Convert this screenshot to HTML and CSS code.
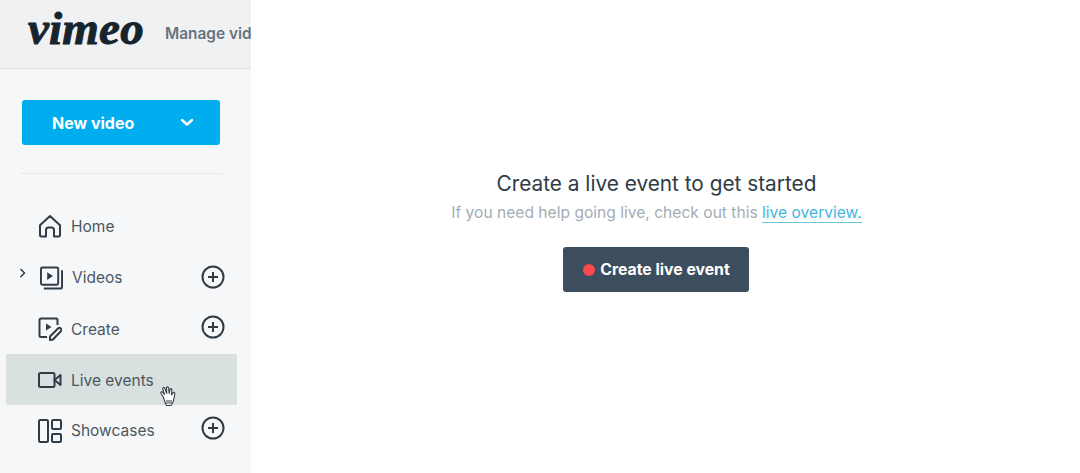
FILE: index.html
```html
<!DOCTYPE html>
<html lang="en">
<head>
  <meta charset="UTF-8" />
  <title>Vimeo - Live events</title>
  <link rel="stylesheet" href="styles.css">
</head>
<body>
  <aside class="sidebar">
    <header class="brand">
      <span class="logo">vimeo</span>
      <span class="brand-title">Manage vid</span>
    </header>

    <div class="new-wrap">
      <button class="new-btn">
        <span>New video</span>
        <svg class="chev" width="14" height="9" viewBox="0 0 14 9"><path d="M2 2l5 4.5L12 2" fill="none" stroke="#fff" stroke-width="2.4" stroke-linecap="round" stroke-linejoin="round"/></svg>
      </button>
    </div>

    <div class="divider"></div>

    <nav class="nav">
      <a class="nav-item home">
        <svg class="icon" width="24" height="24" viewBox="0 0 24 24"><path d="M2 11.2L12 2l10 9.2V21a1.5 1.5 0 0 1-1.5 1.5H16v-6.5a2.5 2.5 0 0 0-2.500-2.500h-3A2.500 2.500 0 0 0 8 16v6.500H3.500A1.500 1.500 0 0 1 2 21z" class="line"/></svg>
        <span class="label">Home</span>
      </a>
      <a class="nav-item">
        <svg class="caret" width="8" height="10" viewBox="0 0 8 10"><path d="M1.500 1l4 4-4 4" fill="none" stroke="#2f3b45" stroke-width="1.500"/></svg>
        <svg class="icon icon-videos" width="23" height="24" viewBox="0 0 24 24"><rect x="1" y="1" width="18" height="18" rx="1.500" class="line"/><path d="M7.500 6v8l6-4z" fill="#2f3b45"/><path d="M23 4v17a2 2 0 0 1-2 2H4" class="line"/></svg>
        <span class="label">Videos</span>
        <svg class="plus" width="24" height="24" viewBox="0 0 24 24"><circle cx="12" cy="12" r="10.500" class="line"/><path d="M12 7v10M7 12h10" class="line"/></svg>
      </a>
      <a class="nav-item">
        <svg class="icon" width="24" height="24" viewBox="0 0 24 24"><path d="M9 20H3a1.500 1.500 0 0 1-1.500-1.500V3A1.500 1.500 0 0 1 3 1.500h15A1.500 1.500 0 0 1 19.500 3v5" class="line"/><path d="M8 6.500v7l5.500-3.500z" fill="#2f3b45"/><path d="M12 23v-3.500L20 11.500a1.800 1.800 0 0 1 2.800 2.800L15 22.500z" class="line"/></svg>
        <span class="label label-low">Create</span>
        <svg class="plus plus-create" width="24" height="24" viewBox="0 0 24 24"><circle cx="12" cy="12" r="10.500" class="line"/><path d="M12 7v10M7 12h10" class="line"/></svg>
      </a>
      <a class="nav-item active">
        <svg class="icon" width="24" height="24" viewBox="0 0 24 24"><rect x="1" y="5" width="15.500" height="14" rx="1.500" class="line"/><path d="M16.500 12l6-5v10z" class="line"/></svg>
        <span class="label label-low">Live events</span>
      </a>
      <a class="nav-item">
        <svg class="icon" width="24" height="24" viewBox="0 0 24 24"><rect x="1" y="1" width="9" height="22" rx="1.200" class="line"/><rect x="14" y="1" width="9" height="9" rx="1.200" class="line"/><rect x="14" y="15" width="9" height="8" rx="1.200" class="line"/></svg>
        <span class="label">Showcases</span>
        <svg class="plus plus-showcases" width="24" height="24" viewBox="0 0 24 24"><circle cx="12" cy="12" r="10.500" class="line"/><path d="M12 7v10M7 12h10" class="line"/></svg>
      </a>
    </nav>

    <!-- mouse pointer from the recording -->
    <svg class="pointer" width="18" height="22" viewBox="0 0 18 22"><path d="M4 10.500L2 7.500c-.8-1.300.8-2.300 1.800-1.200L5.500 8.500 3.800 3c-.4-1.500 1.500-2 2-.6L7.800 7.500 7.500 2c0-1.500 2-1.500 2.100 0l.6 5.500L11 3.500c.3-1.300 2-1 1.900.4l-.4 5 1.500-2c.9-1 2.300-.2 1.800 1.200l-1.300 6.400c-.4 2.300-1.300 3.500-2.500 5H7.500C6 17.500 5.500 13.500 4 10.500z" fill="#fff" stroke="#2f3b45" stroke-width="1.100" stroke-linejoin="round"/><path d="M8 14v4M10 14v4M12 14v4" stroke="#2f3b45" stroke-width="1"/></svg>
  </aside>

  <main class="content">
    <div class="empty">
      <h1>Create a live event to get started</h1>
      <p>If you need help going live, check out this <a class="link">live overview.</a></p>
      <button class="live-btn"><span class="dot"></span>Create live event</button>
    </div>
  </main>
</body>
</html>
```

FILE: styles.css
```css
* { box-sizing: border-box; margin: 0; padding: 0; }

body {
  font-family: 'Inter', 'Liberation Sans', sans-serif;
  background: #fff;
  color: #2f3b45;
  display: flex;
  height: 473px;
  overflow: hidden;
}

.sidebar {
  position: relative;
  width: 251px;
  flex-shrink: 0;
  background: #f6f7f9;
}

.brand {
  height: 69px;
  display: flex;
  align-items: center;
  padding-left: 28px;
  background: #f0f1f3;
  border-bottom: 1px solid #dfe1e3;
  white-space: nowrap;
}

.logo {
  font-family: 'Liberation Serif', serif;
  font-style: italic;
  font-weight: bold;
  font-size: 47px;
  line-height: 1;
  letter-spacing: 0.2px;
  color: #16242e;
  width: 137px;
  flex-shrink: 0;
  margin-top: -11px;
  -webkit-text-stroke: 1px #16242e;
}

.brand-title {
  font-size: 15.4px;
  font-weight: 600;
  color: #67737d;
  margin-top: -2px;
}

.new-wrap {
  padding: 31px 0 0 22px;
}

.new-btn {
  width: 198px;
  height: 45px;
  display: flex;
  align-items: center;
  justify-content: space-between;
  padding: 0 26px 0 30px;
  font-family: inherit;
  font-size: 16px;
  font-weight: 700;
  color: #fff;
  background: #00adef;
  border: none;
  border-radius: 3px;
}

.divider {
  height: 1px;
  margin: 28px 28px 0 20px;
  background: #e6e8ea;
}

.nav {
  margin: 27px 14px 0 6px;
}

.nav-item {
  position: relative;
  display: flex;
  align-items: center;
  height: 51px;
  padding-left: 32px;
  border-radius: 2px;
}

.nav-item.home {
  padding-bottom: 1px;
}

.nav-item.active {
  background: #d8e0e0;
}

.icon {
  flex-shrink: 0;
}

.icon-videos {
  margin-left: 2px;
}

.line {
  fill: none;
  stroke: #2f3b45;
  stroke-width: 2;
  stroke-linejoin: round;
}

.label {
  margin-left: 9px;
  font-size: 15.5px;
  color: #4c5760;
}

.label-low {
  margin-top: 2px;
}

.caret {
  position: absolute;
  left: 13px;
  top: 16px;
}

.plus {
  position: absolute;
  left: 195px;
  top: 13px;
}

.plus-create {
  top: 12px;
}

.plus-showcases {
  top: 11px;
}

.pointer {
  position: absolute;
  left: 159px;
  top: 386px;
}

.content {
  flex: 1;
  display: flex;
  justify-content: center;
  padding-top: 172px;
  padding-right: 18px;
}

.empty {
  text-align: center;
}

h1 {
  font-size: 20.8px;
  font-weight: 400;
  line-height: 24px;
  color: #2f3b45;
}

.empty p {
  margin-top: 7px;
  font-size: 15.6px;
  line-height: 20px;
  color: #a3adb5;
}

.link {
  color: #45b5e0;
  border-bottom: 1px solid #6cc5e8;
}

.live-btn {
  display: inline-flex;
  align-items: center;
  justify-content: center;
  gap: 5px;
  width: 186px;
  height: 45px;
  margin-top: 24px;
  font-family: inherit;
  font-size: 15.8px;
  font-weight: 700;
  color: #fff;
  background: #3c4d5e;
  border: none;
  border-radius: 3px;
}

.dot {
  width: 12px;
  height: 12px;
  border-radius: 50%;
  background: #f9484e;
}
```
